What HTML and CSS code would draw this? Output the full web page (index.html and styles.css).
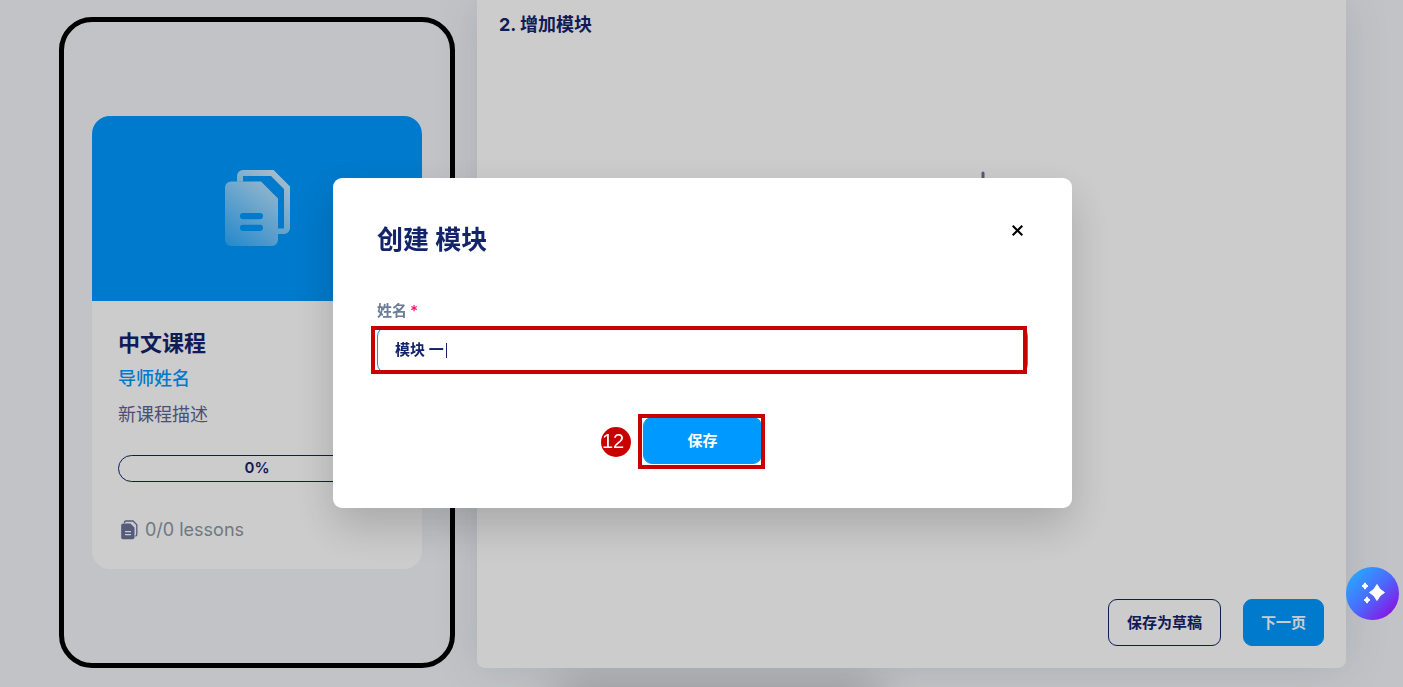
FILE: index.html
```html
<!DOCTYPE html>
<html lang="zh-CN">

<head>
    <meta charset="UTF-8">
    <meta name="viewport" content="width=device-width, initial-scale=1.0">
    <title>创建 模块</title>
    <link rel="stylesheet" href="styles.css">
</head>

<body>

    <main class="page">
        <section class="phone">
            <article class="card">
                <div class="card-cover">
                    <svg class="cover-icon" viewBox="0 0 65 76" aria-hidden="true">
                        <defs>
                            <linearGradient id="coverFill" gradientUnits="userSpaceOnUse" x1="60" y1="2" x2="6" y2="76">
                                <stop offset="0" stop-color="#fff" stop-opacity="0.85" />
                                <stop offset="1" stop-color="#fff" stop-opacity="0.2" />
                            </linearGradient>
                        </defs>
                        <path fill="url(#coverFill)" fill-rule="evenodd" d="M6 11.5H36L53 28.5V70a6 6 0 0 1-6 6H6a6 6 0 0 1-6-6V17.500a6 6 0 0 1 6-6ZM18 43a3 3 0 0 0 0 6.200H35a3 3 0 0 0 0-6.200ZM18 54.700a3 3 0 0 0 0 6.200H35a3 3 0 0 0 0-6.200Z" />
                        <path fill="url(#coverFill)" d="M12 11.500V6a6 6 0 0 1 6-6H48.500L65 16.500V58a6 6 0 0 1-6 6H53V58.500H59V19L46 6H18V11.500Z" />
                    </svg>
                </div>
                <div class="card-body">
                    <h2 class="card-title">中文课程</h2>
                    <a class="card-author" href="#">导师姓名</a>
                    <p class="card-text">新课程描述</p>
                    <div class="progress" role="progressbar" aria-valuenow="0" aria-valuemin="0" aria-valuemax="100">0%</div>
                    <p class="lessons">
                        <svg class="lessons-icon" viewBox="0 0 17 20" aria-hidden="true">
                            <path fill="currentColor" fill-rule="evenodd" d="M2 3.500H9.500L13.500 7.500V17.500a1.800 1.800 0 0 1-1.800 1.800H2A1.800 1.800 0 0 1 .2 17.500V5.300A1.800 1.800 0 0 1 2 3.500ZM4 11v1.200h6V11ZM4 14v1.200h6V14Z" />
                            <path fill="none" stroke="currentColor" stroke-width="1.300" d="M3.500 3V2.500A1.500 1.500 0 0 1 5 1H12L15.800 4.800V14.500A1.500 1.500 0 0 1 14.300 16" />
                        </svg>
                        0/0 lessons
                    </p>
                </div>
            </article>
        </section>

        <section class="panel">
            <h3 class="panel-title">2. 增加模块</h3>
            <div class="panel-content">
                <button class="add-button" type="button" aria-label="增加模块">
                    <svg viewBox="0 0 24 24" aria-hidden="true">
                        <path fill="none" stroke="currentColor" stroke-width="3" stroke-linecap="round" d="M12 2V22M2 12H22" />
                    </svg>
                </button>
            </div>
            <div class="panel-actions">
                <button class="button button-outline" type="button">保存为草稿</button>
                <button class="button button-primary" type="button">下一页</button>
            </div>
        </section>
    </main>

    <div class="overlay">
        <form class="modal" role="dialog" aria-modal="true" aria-labelledby="modalTitle">
            <header class="modal-header">
                <h1 class="modal-title" id="modalTitle">创建 模块</h1>
                <button class="modal-close" type="button" aria-label="关闭">
                    <svg viewBox="0 0 11 11" aria-hidden="true">
                        <path fill="none" stroke="currentColor" stroke-width="2" d="M.7 .7L10.300 10.300M10.300 .7L.7 10.300" />
                    </svg>
                </button>
            </header>
            <label class="label" for="moduleName">姓名<span class="required">*</span></label>
            <div class="field">
                <input class="input" type="text" id="moduleName" value="模块 一" required>
                <span class="caret"></span>
                <span class="highlight highlight-field"></span>
            </div>
            <div class="modal-actions">
                <button class="button button-primary button-save" type="submit">保存</button>
                <span class="highlight highlight-save"></span>
                <span class="step">12</span>
            </div>
        </form>
    </div>

    <button class="assistant" type="button" aria-label="AI">
        <svg viewBox="0 0 24 22" aria-hidden="true">
            <path fill="#fff" stroke="#fff" stroke-linejoin="round" d="M16 2.500Q18.500 8 23.500 10.500Q18.500 13 16 18.500Q13.500 13 8.500 10.500Q13.500 8 16 2.500Z" />
            <path fill="#fff" stroke="#fff" stroke-linejoin="round" d="M4 .8Q5 3 7 4Q5 5 4 7.200Q3 5 1 4Q3 3 4 .8ZM6 14.800Q7 17 9 18Q7 19 6 21.200Q5 19 3 18Q5 17 6 14.800Z" />
        </svg>
    </button>

</body>

</html>
```

FILE: styles.css
```css
* {
    box-sizing: border-box;
}

body {
    font-family: Inter, "Noto Sans CJK SC", sans-serif;
    font-size: 18px;
    line-height: 28px;
    margin: 0;
    color: #14246b;
    background-color: #f2f4f9;
}

h1,
h2,
h3,
p {
    margin: 0;
}

button,
input {
    font-family: inherit;
    font-size: 15px;
    color: inherit;
}

svg {
    display: block;
}

.page {
    position: relative;
    display: grid;
    grid-template-columns: 396px 1fr;
    gap: 22px;
    min-height: 100vh;
    padding: 0 57px 19px 59px;
    overflow: hidden;
}

/* soft shade that rises from the bottom bar */
.page::after {
    content: "";
    position: absolute;
    left: 50%;
    bottom: -30px;
    width: 320px;
    height: 30px;
    margin-left: -144px;
    box-shadow: 0 0 44px rgba(0, 0, 0, 0.3);
}

.phone {
    display: flex;
    align-items: center;
    margin-top: 17px;
    padding: 28px;
    border: 5px solid #000;
    border-radius: 33px;
}

.card {
    width: 100%;
    border-radius: 18px;
    background-color: #fff;
    overflow: hidden;
}

.card-cover {
    display: flex;
    align-items: center;
    justify-content: center;
    height: 185px;
    padding-bottom: 2px;
    background-color: #09f;
}

.cover-icon {
    width: 65px;
    height: 76px;
}

.card-body {
    display: flex;
    flex-direction: column;
    gap: 8px;
    padding: 28px 26px 25px;
}

.card-title {
    font-size: 22px;
    font-weight: 700;
}

.card-author {
    color: #09f;
    font-weight: 500;
    text-decoration: none;
}

.card-text {
    color: #5d6591;
}

.progress {
    margin: 18px 0 26px;
    padding-bottom: 2px;
    border: 1px solid #14246b;
    border-radius: 14px;
    font-size: 15px;
    font-weight: 600;
    line-height: 23px;
    text-align: center;
}

.lessons {
    display: flex;
    align-items: center;
    gap: 7px;
    padding-left: 3px;
    color: #8a97a3;
}

.lessons-icon {
    width: 17px;
    height: 20px;
    color: #6b7299;
}

.panel {
    position: relative;
    z-index: 1;
    display: flex;
    flex-direction: column;
    padding: 11px 22px 22px;
    border-radius: 0 0 8px 8px;
    background-color: #fff;
    box-shadow: 0 0 44px rgba(60, 80, 90, 0.15);
}

.panel-title {
    font-size: 18px;
    font-weight: 700;
}

.panel-content {
    flex: 1;
    padding: 132px 0 0 142px;
}

.add-button {
    display: block;
    width: 24px;
    margin: 0 auto;
    padding: 0;
    border: none;
    background: none;
    color: #69738f;
}

.panel-actions {
    display: flex;
    justify-content: flex-end;
    gap: 22px;
}

.button {
    height: 47px;
    padding: 0 18px 2px;
    border: 1px solid #14246b;
    border-radius: 9px;
    background: none;
    font-weight: 600;
    cursor: pointer;
}

.button-primary {
    padding: 0 17px 2px;
    border-color: #09f;
    background-color: #09f;
    color: #fff;
}

.overlay {
    position: fixed;
    inset: 0;
    z-index: 2;
    display: flex;
    align-items: center;
    justify-content: center;
    padding: 0 0 2px 2px;
    background-color: rgba(0, 0, 0, 0.2);
}

.modal {
    width: 100%;
    max-width: 739px;
    padding: 44px;
    border-radius: 9px;
    background-color: #fff;
    box-shadow: 0 18px 44px rgba(0, 0, 0, 0.18);
}

.modal-header {
    display: flex;
    align-items: flex-start;
    justify-content: space-between;
    margin-bottom: 44px;
}

.modal-title {
    font-size: 26px;
    font-weight: 700;
    line-height: 36px;
    margin-bottom: -2px;
}

.modal-close {
    display: flex;
    align-items: center;
    justify-content: center;
    width: 22px;
    height: 18px;
    padding: 0;
    border: none;
    background: none;
    color: #000;
    cursor: pointer;
}

.modal-close svg {
    width: 11px;
    height: 11px;
}

.label {
    display: block;
    margin-bottom: 5px;
    color: #6b7c99;
    font-size: 15px;
    font-weight: 600;
    line-height: 22px;
}

.required {
    margin-left: 3px;
    color: #ff0f64;
}

.field {
    position: relative;
}

.input {
    display: block;
    width: 100%;
    height: 46px;
    padding: 0 17px 2px;
    border: 1px solid #09f;
    border-radius: 9px;
    outline: none;
    background-color: #fff;
    font-weight: 600;
}

.caret {
    position: absolute;
    top: 16px;
    left: 69px;
    width: 1px;
    height: 15px;
    background-color: #14246b;
}

.modal-actions {
    position: relative;
    width: 119px;
    margin: 44px auto 0;
}

.button-save {
    display: block;
    width: 100%;
}

.highlight {
    position: absolute;
    border: 4px solid #c80000;
    pointer-events: none;
}

.highlight-field {
    inset: -1px 1px -1px -6px;
}

.highlight-save {
    inset: -3px -3px -5px -5px;
}

.step {
    position: absolute;
    top: 10px;
    left: -42px;
    width: 30px;
    height: 30px;
    padding-left: 1px;
    border-radius: 50%;
    background-color: #c80000;
    color: #fff;
    font-family: "Liberation Sans", Arial, sans-serif;
    font-size: 20px;
    line-height: 28px;
}

.assistant {
    position: fixed;
    right: 4px;
    bottom: 67px;
    z-index: 3;
    display: flex;
    align-items: center;
    justify-content: center;
    width: 53px;
    height: 53px;
    padding: 0 0 2px;
    border: none;
    border-radius: 50%;
    background: linear-gradient(135deg, #23b0ff 5%, #4a6bff 50%, #9405dc 95%);
    cursor: pointer;
}

.assistant svg {
    width: 24px;
    height: 22px;
}
```
